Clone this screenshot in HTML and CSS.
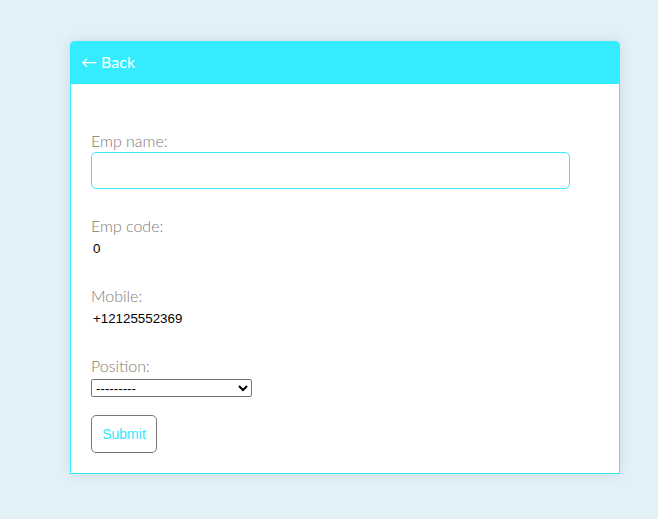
FILE: index.html
```html
<!DOCTYPE html>
<html>
<head>
<meta charset="utf-8">
<link rel="stylesheet" href="styles.css">
</head>
<body>
<div class="page">
  <div class="card">
    <div class="card-header"><a class="back" href="#">← Back</a></div>
    <form class="card-body">
      <div class="group group-input">
        <label class="label">Emp name:</label>
        <input class="text-input" type="text">
      </div>
      <div class="group">
        <label class="label">Emp code:</label>
        <div class="value">0</div>
      </div>
      <div class="group">
        <label class="label">Mobile:</label>
        <div class="value">+12125552369</div>
      </div>
      <div class="group group-select">
        <label class="label">Position:</label>
        <select class="select"><option>---------</option></select>
      </div>
      <button class="submit" type="button">Submit</button>
    </form>
  </div>
</div>
</body>
</html>
```
FILE: styles.css
```css
html, body {
  margin: 0;
  padding: 0;
  background: #e2f1f7;
  height: 100%;
}
.page {
  padding: 41px 0 0 70px;
}
.card {
  width: 548px;
  background: #fff;
  border: 1px solid #35e8fb;
  border-top: none;
  border-radius: 5px 5px 0 0;
  box-shadow: 0 0 14px rgba(0, 0, 0, 0.09);
}
.card-header {
  height: 43px;
  box-sizing: border-box;
  background: #35ecff;
  border-radius: 5px 5px 0 0;
  display: flex;
  align-items: center;
  padding: 0 0 3px 11px;
  margin: 0 -1px;
}
.back {
  color: #fff;
  text-decoration: none;
  font-family: "Lato", "Noto Sans", sans-serif;
  font-size: 16px;
  font-weight: 400;
}
.card-body {
  padding: 47px 20px 20px 20px;
  display: flex;
  flex-direction: column;
}
.group {
  display: flex;
  flex-direction: column;
  align-items: flex-start;
  margin-bottom: 30px;
}
.group-input {
  margin-bottom: 27px;
}
.group-select {
  margin-bottom: 18px;
}
.label {
  font-family: "Lato", "Noto Sans", sans-serif;
  font-weight: 300;
  font-size: 16px;
  line-height: 19px;
  padding-bottom: 1px;
  color: #7f7977;
}
.text-input {
  margin-top: 1px;
  box-sizing: border-box;
  width: 479px;
  height: 37px;
  border: 1px solid #35e8fb;
  border-radius: 5px;
  outline: none;
}
.value {
  margin-top: 5px;
  padding-left: 2px;
  font-family: "Liberation Sans", Arial, sans-serif;
  font-size: 13.333px;
  line-height: 15px;
  color: #000;
}
.select {
  margin-top: 3px;
  width: 161px;
  height: 18px;
  font-family: "Liberation Sans", Arial, sans-serif;
  font-size: 13.333px;
  border: 1px solid #767676;
  border-radius: 2px;
  background: #fff;
  padding: 0;
}
.submit {
  align-self: flex-start;
  box-sizing: border-box;
  width: 66px;
  height: 38px;
  background: #fff;
  border: 1px solid #777;
  border-radius: 5px;
  color: #35e8fb;
  font-family: "Liberation Sans", Arial, sans-serif;
  font-size: 14px;
  padding: 0;
}
```
